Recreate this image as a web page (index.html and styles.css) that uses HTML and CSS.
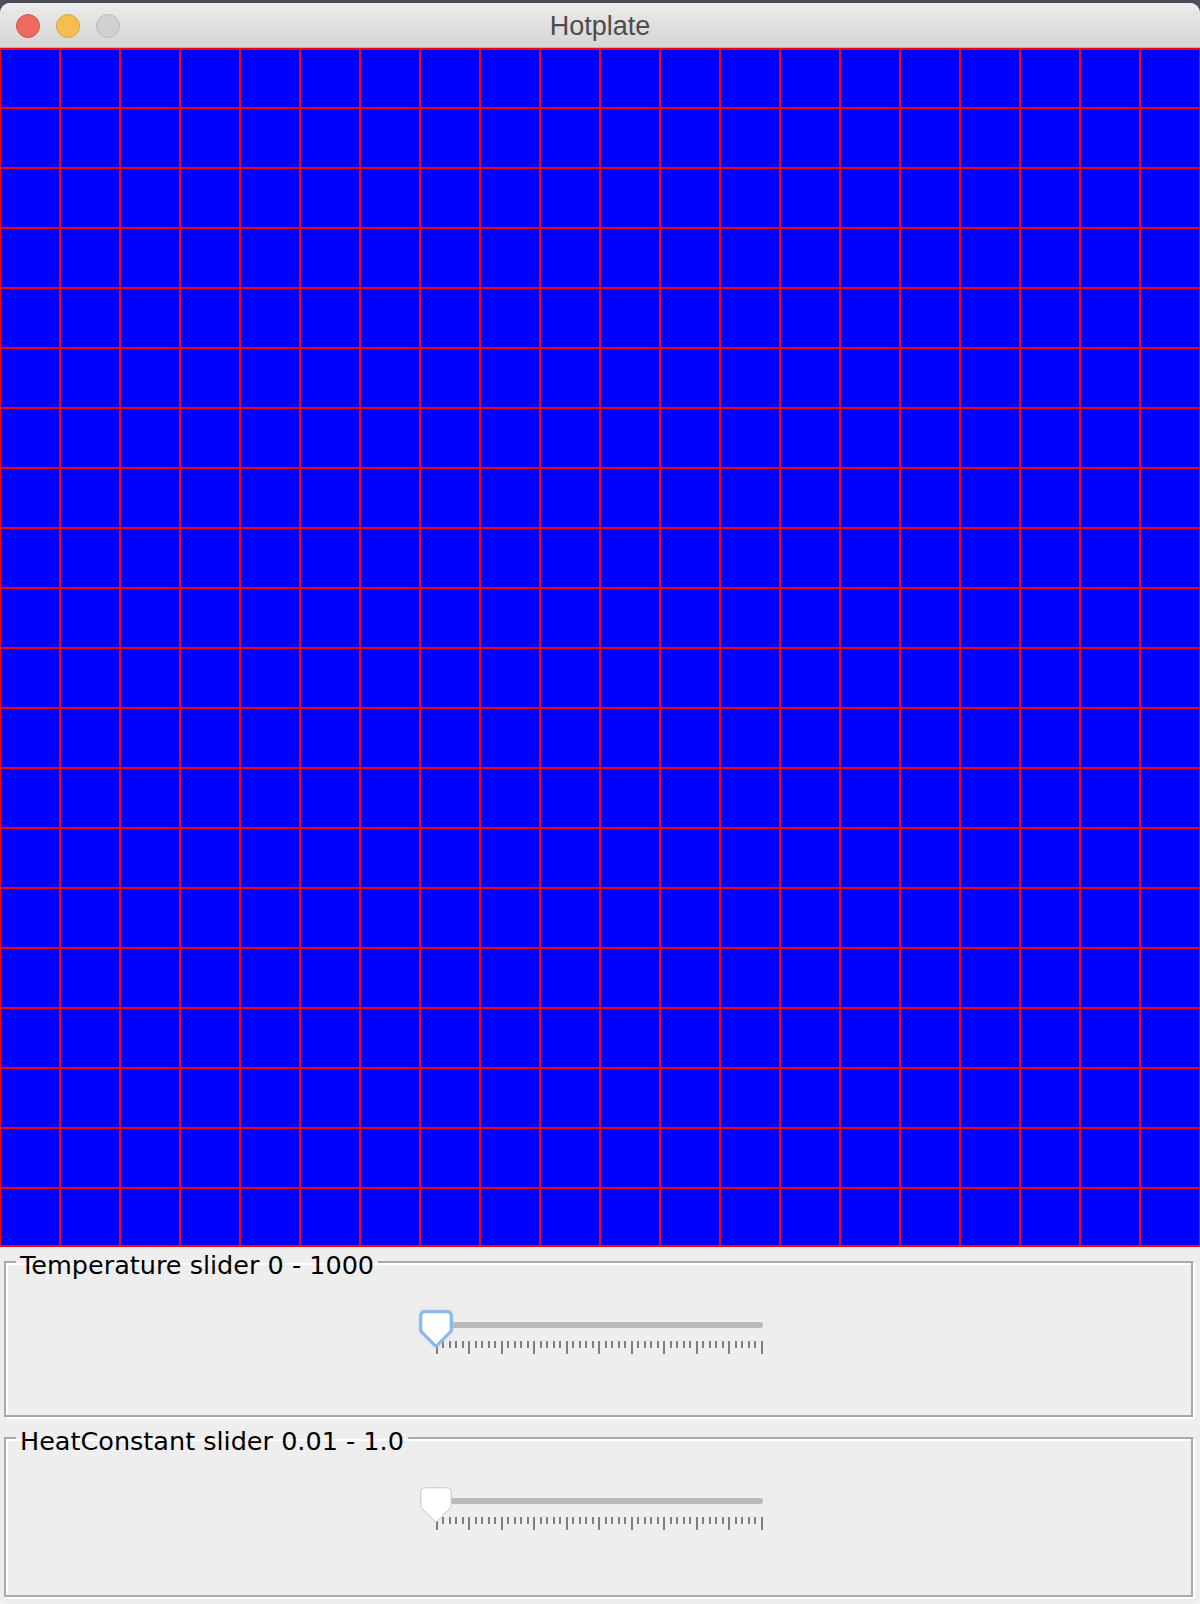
FILE: index.html
```html
<!DOCTYPE html>
<html lang="en">
<head>
    <meta charset="UTF-8">
    <meta name="viewport" content="width=device-width, initial-scale=1.0">
    <title>Hotplate</title>
    <link rel="stylesheet" href="styles.css">
</head>
<body>

    <div class="window">
        <!-- title bar -->
        <div class="titlebar">
            <div class="lights">
                <span class="light close"></span>
                <span class="light minimize"></span>
                <span class="light zoom"></span>
            </div>
            <div class="title">Hotplate</div>
            <div></div>
        </div>

        <!-- the plate: 20 x 20 cells -->
        <div class="plate"></div>

        <fieldset class="panel panel-temp">
            <legend>Temperature slider 0 - 1000</legend>
            <div class="slider focused">
                <svg class="thumb" width="32" height="36" viewBox="0 0 32 36">
                    <path d="M5 0.8 H27 Q31.2 0.8 31.2 5 V20 L16.6 34.8 Q16 35.4 15.4 34.8 L0.8 20 V5 Q0.8 0.8 5 0.8 Z"/>
                </svg>
                <div class="track"></div>
                <div class="ticks"></div>
            </div>
        </fieldset>

        <fieldset class="panel panel-heat">
            <legend>HeatConstant slider 0.01 - 1.0</legend>
            <div class="slider">
                <svg class="thumb" width="32" height="36" viewBox="0 0 32 36">
                    <path d="M5 0.8 H27 Q31.2 0.8 31.2 5 V20 L16.6 34.8 Q16 35.4 15.4 34.8 L0.8 20 V5 Q0.8 0.8 5 0.8 Z"/>
                </svg>
                <div class="track"></div>
                <div class="ticks"></div>
            </div>
        </fieldset>
    </div>

    <script>
        // 51 ticks on each slider, a long one every 5th
        document.querySelectorAll('.ticks').forEach(function(row) {
            for (let i = 0; i <= 50; i++) {
                const tick = document.createElement('span');
                tick.className = i % 5 === 0 ? 'tick major' : 'tick';
                row.appendChild(tick);
            }
        });
    </script>
</body>
</html>
```

FILE: styles.css
```css
html {
    background: linear-gradient(#4a4e56 0 40px, #f4f4f4 40px);
}

body {
    margin: 0;
    height: 1604px;
    overflow: hidden;
    font-family: "DejaVu Sans", Verdana, sans-serif;
}

.window {
    margin-top: 3px;
    height: 1601px;
    background-color: #eeeeee;
    border-radius: 10px 10px 8px 8px;
    overflow: hidden;
}

.titlebar {
    height: 44px;
    display: grid;
    grid-template-columns: 1fr auto 1fr;
    align-items: center;
    background: linear-gradient(#ececec, #d5d5d5);
    border-bottom: 1px solid #b4b4b4;
}

.lights {
    display: flex;
    gap: 16px;
    padding-left: 16px;
    padding-top: 2px;
}

.light {
    width: 22px;
    height: 22px;
    border-radius: 50%;
    border: 1px solid;
}

.close {
    background-color: #ed6a5e;
    border-color: #d35649;
}

.minimize {
    background-color: #f5be4f;
    border-color: #d9a23f;
}

.zoom {
    background-color: #d0d0d0;
    border-color: #bbbbbb;
}

.title {
    font-family: "Liberation Sans", Arial, sans-serif;
    font-size: 27px;
    color: #4c4c4c;
    padding-top: 2px;
}

.plate {
    height: 1199px;
    box-sizing: border-box;
    border-top: 2px solid #ff0000;
    border-bottom: 2px solid #ff0000;
    background-color: #0000ff;
    background-image:
        linear-gradient(to right, #ff0000 2px, transparent 2px),
        linear-gradient(to bottom, #ff0000 2px, transparent 2px);
    background-size: 60px 100%, 100% 60px;
    background-repeat: repeat-x, repeat-y;
    background-position: -1px 0, 0 57px;
}

.panel {
    box-sizing: border-box;
    margin: 0 7px 0 4px;
    padding: 34px 10px 0;
    border: 2px solid #a9a9a9;
    box-shadow: inset 2px 2px 0 #ffffff, 2px 2px 0 #ffffff;
    min-width: 0;
}

.panel-temp {
    height: 170px;
}

.panel-heat {
    height: 174px;
    margin-top: 6px;
}

legend {
    font-size: 25.5px;
    line-height: 24px;
    padding: 6px 4px 0;
    color: #000000;
}

.slider {
    position: relative;
    width: 358px;
    margin: 0 auto;
    padding-top: 11px;
}

.thumb {
    position: absolute;
    left: 0;
    top: 0;
    overflow: visible;
}

.thumb path {
    fill: #ffffff;
    stroke: #c6c6c6;
    stroke-width: 1;
}

.focused .thumb path {
    stroke: #86b8ef;
    stroke-width: 3;
}

.focused .thumb {
    filter: drop-shadow(0 0 1px #a9cdf5);
}

.track {
    margin-right: 15px;
    height: 6px;
    border-radius: 3px;
    background-color: #b9b9b9;
}

.ticks {
    display: flex;
    justify-content: space-between;
    align-items: flex-start;
    margin: 13px 15px 0 16px;
    height: 13px;
}

.tick {
    width: 2px;
    height: 7px;
    background-color: #7f7f7f;
}

.tick.major {
    height: 13px;
}
```
